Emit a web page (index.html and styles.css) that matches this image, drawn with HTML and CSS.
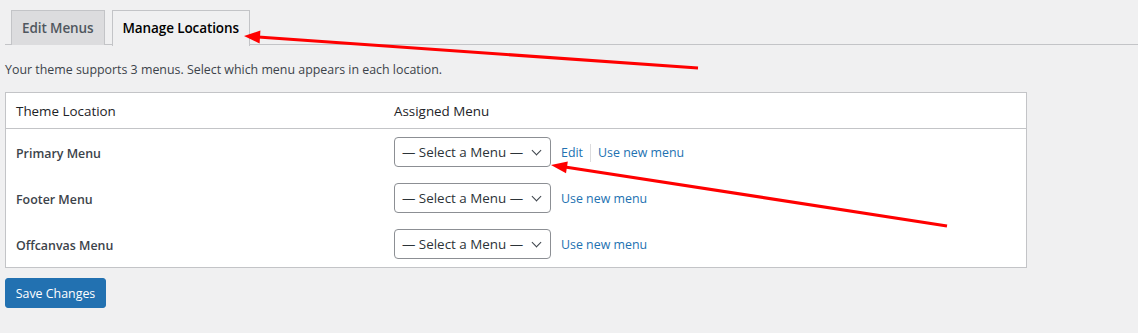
FILE: index.html
```html
<!DOCTYPE html>
<html lang="en">
<head>
  <meta charset="UTF-8">
  <title>Menus - Manage Locations</title>
  <link rel="stylesheet" href="styles.css">
</head>
<body>
  <div class="wrap">
    <nav class="nav-tabs">
      <a class="nav-tab" href="#">Edit Menus</a>
      <a class="nav-tab active" href="#">Manage Locations</a>
    </nav>

    <p class="intro">Your theme supports 3 menus. Select which menu appears in each location.</p>

    <form class="locations">
      <table class="widefat">
        <thead>
          <tr>
            <th class="col-location">Theme Location</th>
            <th>Assigned Menu</th>
          </tr>
        </thead>
        <tbody>
          <tr>
            <td class="loc-name">Primary Menu</td>
            <td>
              <div class="assign">
                <span class="select"><select><option>— Select a Menu —</option></select></span>
                <span class="links"><a href="#">Edit</a><span class="sep"></span><a href="#">Use new menu</a></span>
              </div>
            </td>
          </tr>
          <tr>
            <td class="loc-name">Footer Menu</td>
            <td>
              <div class="assign">
                <span class="select"><select><option>— Select a Menu —</option></select></span>
                <span class="links"><a href="#">Use new menu</a></span>
              </div>
            </td>
          </tr>
          <tr>
            <td class="loc-name">Offcanvas Menu</td>
            <td>
              <div class="assign">
                <span class="select"><select><option>— Select a Menu —</option></select></span>
                <span class="links"><a href="#">Use new menu</a></span>
              </div>
            </td>
          </tr>
        </tbody>
      </table>
      <button type="button" class="button-primary">Save Changes</button>
    </form>
  </div>

  <!-- annotation arrows drawn over the screenshot -->
  <svg class="arrows" width="1138" height="333" viewBox="0 0 1138 333">
    <line x1="698" y1="68" x2="258" y2="37" />
    <polygon points="244,36 260.4,30.6 259.6,43.6" />
    <line x1="947" y1="226" x2="565" y2="167" />
    <polygon points="551,165 567.8,161.5 566,173.3" />
  </svg>
</body>
</html>
```

FILE: styles.css
```css
body { margin: 0; background: #f0f0f1; font-family: "Open Sans", "Noto Sans", sans-serif; font-size: 13px; color: #3c434a; position: relative; }
a { color: #2271b1; text-decoration: none; }
.wrap { padding: 10px 0 0 5px; width: 1133px; }

.nav-tabs { display: flex; border-bottom: 1px solid #c3c4c7; height: 34px; }
.nav-tab { display: block; margin-left: 6px; padding: 5px 10px; height: 24px; line-height: 24px; font-size: 13.5px; font-weight: 600; color: #50575e; background: #dcdcde; border: 1px solid #c3c4c7; border-bottom: none; letter-spacing: -0.1px; }
.nav-tab.active { background: #f0f0f1; color: #000; height: 25px; margin-bottom: -1px; margin-left: 7px; }

.intro { margin: 16px 0 0; line-height: 18px; font-size: 12.4px; }

.widefat { margin-top: 13px; width: 1022px; border-collapse: collapse; background: #fff; border: 1px solid #c3c4c7; }
.widefat th { text-align: left; font-weight: 400; font-size: 13.4px; color: #1d2327; padding: 0 10px; height: 35px; border-bottom: 1px solid #c3c4c7; }
.widefat th.col-location { width: 358px; }
.widefat td { padding: 0 10px; height: 46px; }
.widefat td.loc-name { padding-top: 3px; height: 43px; }
.loc-name { font-weight: 600; font-size: 12.4px; color: #3c434a; }

.assign { display: flex; align-items: center; gap: 10px; }
.select { position: relative; display: block; width: 157px; height: 30px; }
.select select { appearance: none; width: 157px; height: 30px; border: 1px solid #8c8f94; border-radius: 4px; background: #fff; padding: 0 20px 0 7px; font-family: inherit; font-size: 13.4px; color: #2c3338; }
.select::after { content: ""; position: absolute; right: 11px; top: 10px; width: 6px; height: 6px; border-right: 1.7px solid #3c434a; border-bottom: 1.7px solid #3c434a; transform: rotate(45deg); pointer-events: none; }
.links { display: flex; align-items: center; font-size: 12.4px; padding-top: 1px; }
.sep { display: inline-block; width: 1px; height: 18px; background: #dcdcde; margin: 0 7px; }

.button-primary { margin-top: 10px; width: 101px; height: 30px; padding: 0; background: #2271b1; color: #fff; border: 1px solid #2271b1; border-radius: 3px; font-family: inherit; font-size: 12.4px; cursor: pointer; }

.arrows { position: absolute; top: 0; left: 0; pointer-events: none; }
.arrows line { stroke: #ff0000; stroke-width: 3.2; }
.arrows polygon { fill: #ff0000; }
```
